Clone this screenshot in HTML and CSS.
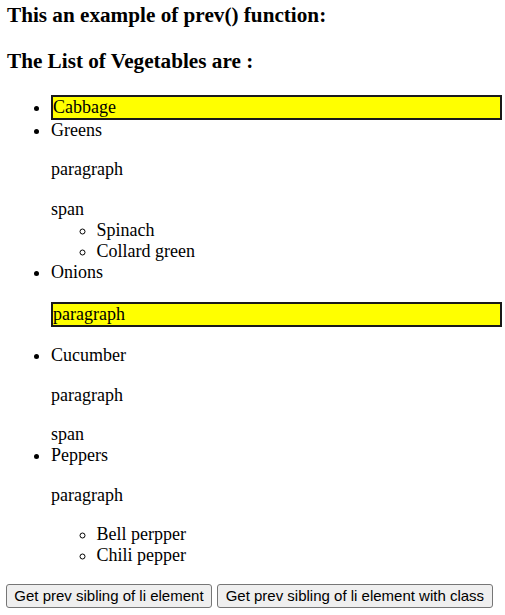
FILE: index.html
```html
<!DOCTYPE html>
<html>
<head>
<meta charset="utf-8">
<title>prev() example</title>
<link rel="stylesheet" href="styles.css">
</head>
<body>
<h3 class="title">This an example of prev() function:</h3>
<div class="content">
  <h3>The List of Vegetables are :</h3>
  <ul class="veg">
    <li class="hl">Cabbage</li>
    <li>Greens
      <p>paragraph</p>
      <span>span</span>
      <ul class="sub">
        <li>Spinach</li>
        <li>Collard green</li>
      </ul>
    </li>
    <li>Onions
      <p class="hl">paragraph</p>
    </li>
    <li>Cucumber
      <p>paragraph</p>
      <span>span</span>
    </li>
    <li>Peppers
      <p>paragraph</p>
      <ul class="sub">
        <li>Bell perpper</li>
        <li>Chili pepper</li>
      </ul>
    </li>
  </ul>
</div>
<button class="btn">Get prev sibling of li element</button>
<button class="btn">Get prev sibling of li element with class</button>
</body>
</html>
```
FILE: styles.css
```css
html, body {
  background: #fff;
}
body {
  margin: 0 3px 0 5.5px;
  padding-top: 2.5px;
  font-family: "Liberation Serif", "Times New Roman", serif;
  font-size: 18px;
  line-height: 21.15px;
  color: #000;
}
h3 {
  font-size: 21.2px;
  line-height: 24.7px;
  font-weight: bold;
  margin: 21.5px 0;
  padding-left: 1.5px;
}
h3.title {
  margin-top: 0;
}
ul {
  margin: 18px 0;
  padding-left: 45.5px;
}
ul.veg {
  list-style-type: disc;
  margin-bottom: 17.5px;
}
ul.sub {
  margin: 0;
  list-style-type: circle;
}
p {
  margin: 18.25px 0;
}
.hl {
  background: #ffff00;
  border: 2px solid #1a1a1a;
}
.btn {
  font-family: "Liberation Sans", Arial, sans-serif;
  font-size: 15px;
  line-height: 18px;
  color: #000;
  background: #efefef;
  border: 1.5px solid #767676;
  border-radius: 3px;
  padding: 2px 7.8px;
  margin: 0;
  height: 24.5px;
}
```
